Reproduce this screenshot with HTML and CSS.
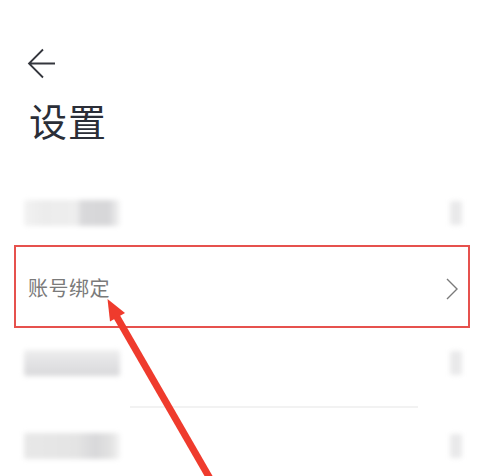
FILE: index.html
```html
<!DOCTYPE html>
<html lang="zh">
<head>
<meta charset="utf-8">
<link rel="stylesheet" href="styles.css">
</head>
<body>
<div class="page">
  <div class="back">
    <svg width="30" height="32" viewBox="0 0 30 32"><path d="M2 15.5 H28 M16 1.5 L2 15.5 L16 29.5" fill="none" stroke="#34363d" stroke-width="1.8" stroke-linejoin="miter"/></svg>
  </div>
  <h1 class="title">设置</h1>
  <div class="list">
    <div class="row row-first">
      <div class="blur blur-left b1"></div>
      <div class="blur blur-right"></div>
    </div>
    <div class="row row-hl">
      <span class="label">账号绑定</span>
      <svg class="chev" width="12" height="22" viewBox="0 0 12 22"><path d="M1 1 L11 11 L1 21" fill="none" stroke="#7a7a7a" stroke-width="1.4"/></svg>
    </div>
    <div class="row row-third">
      <div class="blur blur-left b3"></div>
      <div class="blur blur-right"></div>
    </div>
    <div class="divider"></div>
    <div class="row row-fourth">
      <div class="blur blur-left b4"></div>
      <div class="blur blur-right"></div>
    </div>
  </div>
  <svg class="annot" width="494" height="476" viewBox="0 0 494 476">
    <line x1="114" y1="312" x2="212" y2="482" stroke="#ef3b2d" stroke-width="7"/>
    <polygon points="107.5,299 125,313 110,321.5" fill="#ef3b2d"/>
  </svg>
</div>
</body>
</html>
```
FILE: styles.css
```css
html, body {
  margin: 0;
  padding: 0;
  background: #ffffff;
}
body {
  font-family: "Noto Sans CJK SC", "Noto Sans", sans-serif;
  width: 494px;
  height: 476px;
  overflow: hidden;
}
.page {
  position: relative;
  width: 494px;
  height: 476px;
}
.back {
  padding: 48px 0 0 27px;
  height: 32px;
}
.back svg {
  display: block;
}
.title {
  margin: 18px 0 0 29px;
  font-size: 38px;
  line-height: 44px;
  font-weight: 400;
  color: #2b2e37;
  letter-spacing: 1px;
}
.list {
  margin-top: 53px;
  padding: 0 24px 0 14px;
}
.row {
  display: flex;
  align-items: center;
  justify-content: space-between;
  padding: 0 8px 0 10px;
}
.row-first {
  height: 36px;
}
.row-hl {
  margin-top: 14px;
  height: 79px;
  border: 2px solid #e6514d;
  padding: 0 10px 0 12px;
}
.row-third {
  margin-top: 18px;
  height: 34px;
}
.divider {
  margin: 26px 52px 0 116px;
  height: 2px;
  background: #f2f2f2;
}
.row-fourth {
  margin-top: 22px;
  height: 32px;
}
.label {
  font-size: 20px;
  color: #7a7a7a;
  letter-spacing: 0.5px;
  margin-top: 2px;
}
.chev {
  display: block;
  margin-top: 4px;
}
.blur {
  filter: blur(2.5px);
  border-radius: 2px;
}
.blur-left {
  width: 96px;
  height: 26px;
}
.b1 {
  background: linear-gradient(90deg, #f2f2f2 0%, #ececec 20%, #eeeeee 55%, #d9d9db 60%, #d6d6d8 88%, #f4f4f4 100%);
}
.b3 {
  background: linear-gradient(180deg, #eeeeee 0%, #e2e2e4 50%, #d9d9db 100%);
}
.b4 {
  background: linear-gradient(90deg, #e8e8e8 0%, #e4e4e4 55%, #d8d8da 75%, #e2e2e2 90%, #f4f4f4 100%);
}
.blur-right {
  width: 12px;
  height: 24px;
  background: #e9e9ea;
}
.annot {
  position: absolute;
  left: 0;
  top: 0;
  pointer-events: none;
}
```
